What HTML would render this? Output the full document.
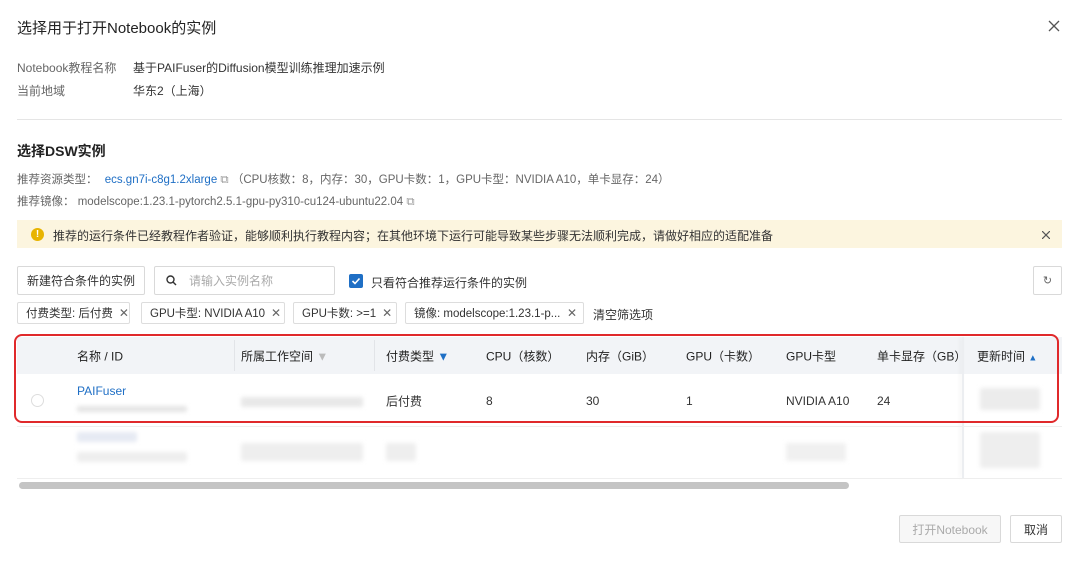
<!DOCTYPE html>
<html><head><meta charset="utf-8"><style>
*{box-sizing:border-box;margin:0;padding:0}
body{width:1080px;height:564px;background:#fff;font-family:"Liberation Sans","Noto Sans CJK SC",sans-serif;color:#333;position:relative;overflow:hidden;font-size:12px}
.a{position:absolute;white-space:nowrap}
.g{color:#666}
.btn{position:absolute;border:1px solid #d9d9d9;background:#fff;border-radius:2px;display:flex;align-items:center;justify-content:center;font-size:12px;white-space:nowrap}
.tag{position:absolute;top:302px;height:22px;border:1px solid #ddd;border-radius:2px;display:flex;align-items:center;padding:0 6px 0 8px;font-size:11.5px;color:#333;justify-content:space-between;white-space:nowrap;overflow:hidden}
.tag span.x{color:#666;margin-left:6px;font-size:12px}
.blur{position:absolute;background:#e8e8e8;filter:blur(2px);border-radius:2px}
.th{position:absolute;top:356px;transform:translateY(-50%);font-size:12px;color:#222;white-space:nowrap}
.td{position:absolute;top:401px;transform:translateY(-50%);font-size:12px;color:#333;white-space:nowrap}
</style></head><body>
<div class="a" style="left:17px;top:17px;font-size:15px;color:#222">选择用于打开Notebook的实例</div>
<svg class="a" style="left:1048px;top:20px" width="12" height="12" viewBox="0 0 12 12"><path d="M1 1L11 11M11 1L1 11" stroke="#555" stroke-width="1.3"/></svg>
<div class="a g" style="left:17px;top:59px">Notebook教程名称</div>
<div class="a" style="left:133px;top:59px">基于PAIFuser的Diffusion模型训练推理加速示例</div>
<div class="a g" style="left:17px;top:82px">当前地域</div>
<div class="a" style="left:133px;top:82px">华东2（上海）</div>
<div class="a" style="left:17px;top:119px;width:1045px;height:1px;background:#e5e5e5"></div>
<div class="a" style="left:17px;top:141px;font-size:14px;font-weight:bold;color:#222">选择DSW实例</div>
<div class="a g" style="left:17px;top:171px;font-size:11.5px">推荐资源类型： <span style="color:#1f6fc5;margin-left:4px">ecs.gn7i-c8g1.2xlarge</span> <span style="color:#999">⧉</span> （CPU核数：8，内存：30，GPU卡数：1，GPU卡型：NVIDIA A10，单卡显存：24）</div>
<div class="a g" style="left:17px;top:193px;font-size:11.5px">推荐镜像：  modelscope:1.23.1-pytorch2.5.1-gpu-py310-cu124-ubuntu22.04 <span style="color:#999">⧉</span></div>
<div class="a" style="left:17px;top:220px;width:1045px;height:28px;background:#fcf5df"></div>
<div class="a" style="left:31px;top:228px;width:13px;height:13px;border-radius:50%;background:#e8b400;color:#fff;font-size:10px;font-weight:bold;text-align:center;line-height:13px">!</div>
<div class="a" style="left:53px;top:227px;color:#333">推荐的运行条件已经教程作者验证，能够顺利执行教程内容；在其他环境下运行可能导致某些步骤无法顺利完成，请做好相应的适配准备</div>
<svg class="a" style="left:1042px;top:231px" width="8" height="8" viewBox="0 0 8 8"><path d="M0 0L8 8M8 0L0 8" stroke="#555" stroke-width="1.2"/></svg>
<div class="btn" style="left:17px;top:266px;width:128px;height:29px">新建符合条件的实例</div>
<div class="btn" style="left:154px;top:266px;width:181px;height:29px;justify-content:flex-start;padding-left:11px;color:#aaa"><svg width="11" height="11" viewBox="0 0 11 11"><circle cx="4.5" cy="4.5" r="3.5" stroke="#333" stroke-width="1.4" fill="none"/><path d="M7 7L10 10" stroke="#333" stroke-width="1.4"/></svg><span style="margin-left:12px">请输入实例名称</span></div>
<div class="a" style="left:349px;top:274px;width:14px;height:14px;background:#1f6fc5;border-radius:2px"><svg width="14" height="14" viewBox="0 0 14 14"><path d="M3.5 7L6 9.5L10.5 4.5" stroke="#fff" stroke-width="1.6" fill="none"/></svg></div>
<div class="a" style="left:371px;top:274px">只看符合推荐运行条件的实例</div>
<div class="btn" style="left:1033px;top:266px;width:29px;height:29px;color:#666;font-size:11px">↻</div>
<div class="tag" style="left:17px;width:113px">付费类型: 后付费<span class="x">✕</span></div>
<div class="tag" style="left:141px;width:144px">GPU卡型: NVIDIA A10<span class="x">✕</span></div>
<div class="tag" style="left:293px;width:104px">GPU卡数: &gt;=1<span class="x">✕</span></div>
<div class="tag" style="left:405px;width:179px">镜像: modelscope:1.23.1-p...<span class="x">✕</span></div>
<div class="a" style="left:593px;top:306px">清空筛选项</div>
<div class="a" style="left:17px;top:337px;width:1045px;height:37px;background:#f2f4f7"></div>
<div class="a" style="left:234px;top:340px;width:1px;height:31px;background:#e2e4e8"></div>
<div class="a" style="left:374px;top:340px;width:1px;height:31px;background:#e2e4e8"></div>
<div class="a" style="left:962px;top:337px;width:2px;height:141px;background:#eceef1;box-shadow:-2px 0 4px rgba(0,0,0,.06)"></div>
<div class="a" style="left:17px;top:426px;width:1045px;height:1px;background:#eee"></div>
<div class="a" style="left:17px;top:478px;width:1045px;height:1px;background:#eee"></div>
<div class="th" style="left:77px">名称 / ID</div>
<div class="th" style="left:241px">所属工作空间 <span style="color:#bbb">▼</span></div>
<div class="th" style="left:386px">付费类型 <span style="color:#1f6fc5">▼</span></div>
<div class="th" style="left:486px">CPU（核数）</div>
<div class="th" style="left:586px">内存（GiB）</div>
<div class="th" style="left:686px">GPU（卡数）</div>
<div class="th" style="left:786px">GPU卡型</div>
<div class="th" style="left:877px">单卡显存（GB）</div>
<div class="th" style="left:977px">更新时间 <span style="color:#1f6fc5;font-size:9px">▲</span></div>
<div class="a" style="left:31px;top:394px;width:13px;height:13px;border:1px solid #ddd;border-radius:50%"></div>
<div class="a" style="left:77px;top:384px;color:#1f6fc5">PAIFuser</div>
<div class="blur" style="left:77px;top:406px;width:110px;height:6px;background:#e4e4e4"></div>
<div class="blur" style="left:241px;top:397px;width:122px;height:10px"></div>
<div class="td" style="left:386px">后付费</div>
<div class="td" style="left:486px">8</div>
<div class="td" style="left:586px">30</div>
<div class="td" style="left:686px">1</div>
<div class="td" style="left:786px">NVIDIA A10</div>
<div class="td" style="left:877px">24</div>
<div class="blur" style="left:980px;top:388px;width:60px;height:22px;background:#ececec"></div>
<div class="blur" style="left:77px;top:432px;width:60px;height:10px;background:#e6eaf3"></div>
<div class="blur" style="left:77px;top:452px;width:110px;height:10px;background:#eee"></div>
<div class="blur" style="left:241px;top:443px;width:122px;height:18px;background:#eee"></div>
<div class="blur" style="left:386px;top:443px;width:30px;height:18px;background:#eee"></div>
<div class="blur" style="left:786px;top:443px;width:60px;height:18px;background:#f0f0f0"></div>
<div class="blur" style="left:980px;top:432px;width:60px;height:36px;background:#eee"></div>
<div class="a" style="left:14px;top:334px;width:1045px;height:89px;border:2px solid #e0292b;border-radius:8px"></div>
<div class="a" style="left:19px;top:482px;width:830px;height:7px;border-radius:4px;background:#c4c4c4"></div>
<div class="btn" style="left:899px;top:515px;width:102px;height:28px;color:#aaa;background:#f7f7f7">打开Notebook</div>
<div class="btn" style="left:1010px;top:515px;width:52px;height:28px">取消</div>
</body></html>
